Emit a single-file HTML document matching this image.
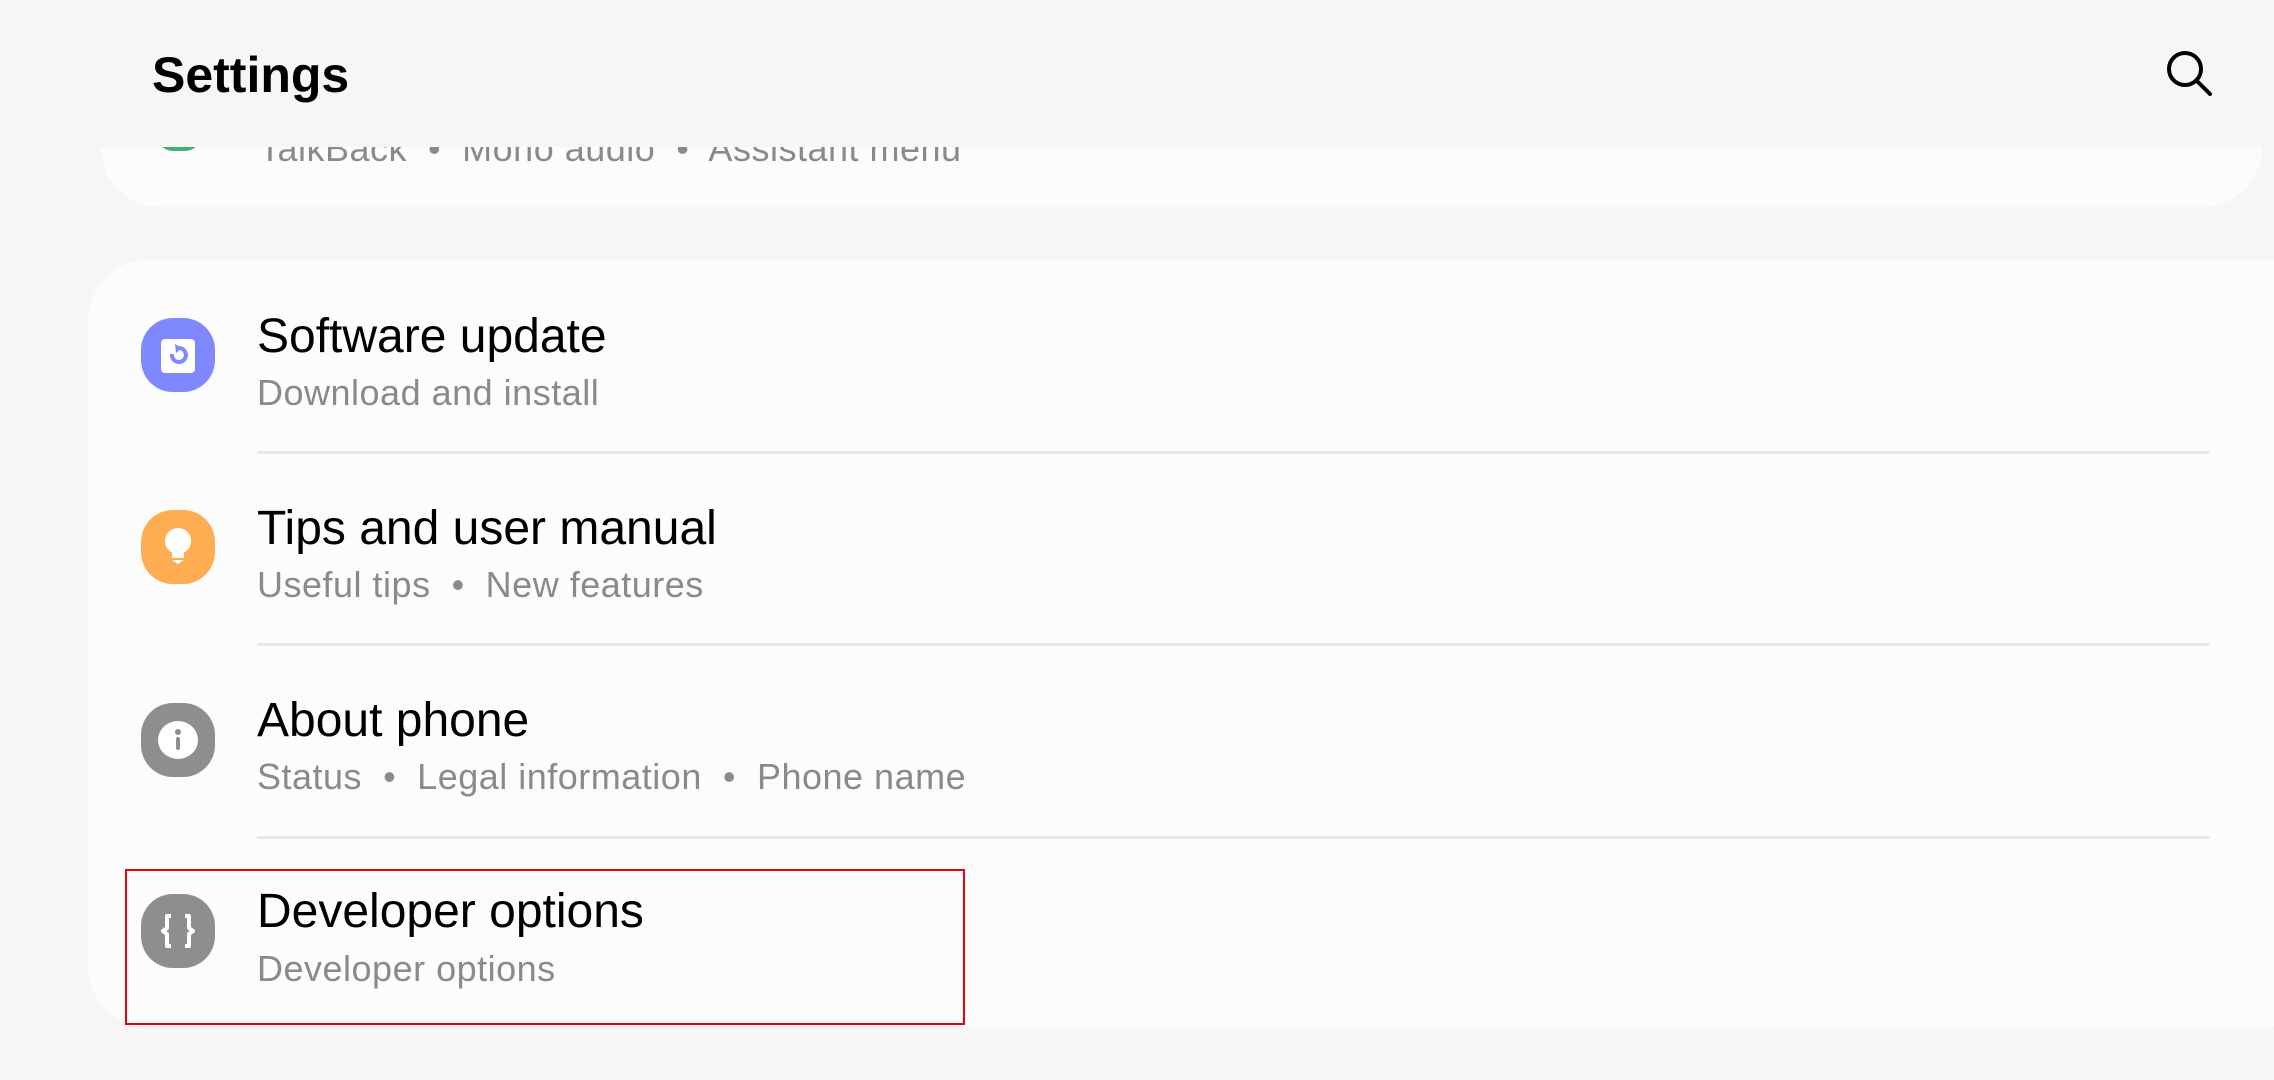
<!DOCTYPE html>
<html><head><meta charset="utf-8"><style>
html,body{margin:0;padding:0;}
body{width:2274px;height:1080px;background:#f6f6f6;position:relative;overflow:hidden;font-family:"Liberation Sans",sans-serif;}
.abs{position:absolute;}
.topclip{position:absolute;left:0;top:147px;width:2274px;height:80px;overflow:hidden;}
.topcard{position:absolute;left:101px;top:-60px;width:2161px;height:120px;background:#fcfcfc;border-radius:60px;}
.card{position:absolute;left:88px;top:260px;width:2240px;height:767px;background:#fcfcfc;border-radius:60px;}
.t{position:absolute;left:257px;font-size:48px;color:#000;white-space:nowrap;line-height:1;}
.s{position:absolute;left:257px;font-size:36px;color:#8a8a8a;white-space:nowrap;line-height:1;letter-spacing:0.5px;}
.div{position:absolute;left:257px;width:1953px;height:3px;background:#e8e8e8;}
.ic{position:absolute;left:141px;width:74px;height:74px;border-radius:32px;}
</style></head><body>
<div class="abs" style="left:152px;top:50px;font-size:50px;font-weight:bold;color:#000;line-height:1;">Settings</div>
<svg class="abs" style="left:2160px;top:44px" width="60" height="60" viewBox="0 0 60 60"><circle cx="25" cy="25" r="16" fill="none" stroke="#000" stroke-width="4"/><line x1="37" y1="37" x2="50" y2="50" stroke="#000" stroke-width="4" stroke-linecap="round"/></svg>
<div class="topclip"><div class="topcard"></div>
<div class="abs" style="left:157px;top:-12px;width:44px;height:16px;border-radius:0 0 22px 22px;background:#3cb371;"></div>
<div class="s" style="top:-16px;left:259px;">TalkBack &nbsp;•&nbsp; Mono audio &nbsp;•&nbsp; Assistant menu</div>
</div>
<div class="card"></div>

<div class="ic" style="top:318px;background:#8088ff;"></div>
<svg class="abs" style="left:141px;top:318px" width="74" height="74" viewBox="0 0 74 74"><rect x="20" y="21" width="34" height="34" rx="4" fill="#fff"/><path d="M31 36 a7 7 0 1 0 7 -6" fill="none" stroke="#8088ff" stroke-width="4"/><path d="M34 26 l7 4 -6 5z" fill="#8088ff"/></svg>
<div class="t" style="top:313px;">Software update</div>
<div class="s" style="top:375px;">Download and install</div>
<div class="div" style="top:451px;"></div>

<div class="ic" style="top:510px;background:#ffad52;"></div>
<svg class="abs" style="left:141px;top:510px" width="74" height="74" viewBox="0 0 74 74"><circle cx="37" cy="31" r="13" fill="#fff"/><rect x="31" y="40" width="12" height="8" fill="#fff"/><path d="M31 50 h12 l-6 4z" fill="#fff"/></svg>
<div class="t" style="top:505px;">Tips and user manual</div>
<div class="s" style="top:567px;">Useful tips &nbsp;•&nbsp; New features</div>
<div class="div" style="top:643px;"></div>

<div class="ic" style="top:703px;background:#8e8e8e;"></div>
<svg class="abs" style="left:141px;top:703px" width="74" height="74" viewBox="0 0 74 74"><ellipse cx="37" cy="37" rx="20" ry="19" fill="#fff"/><circle cx="37" cy="29" r="3" fill="#8e8e8e"/><rect x="35" y="34" width="4" height="13" rx="2" fill="#8e8e8e"/></svg>
<div class="t" style="top:697px;">About phone</div>
<div class="s" style="top:759px;">Status &nbsp;•&nbsp; Legal information &nbsp;•&nbsp; Phone name</div>
<div class="div" style="top:836px;"></div>

<div class="ic" style="top:894px;background:#8e8e8e;"></div>
<svg class="abs" style="left:141px;top:894px" width="74" height="74" viewBox="0 0 74 74"><path d="M30 22 h-4 v12 l-4 3 4 3 v12 h4" fill="none" stroke="#fff" stroke-width="4" stroke-linejoin="round"/><path d="M44 22 h4 v12 l4 3 -4 3 v12 h-4" fill="none" stroke="#fff" stroke-width="4" stroke-linejoin="round"/></svg>
<div class="t" style="top:888px;">Developer options</div>
<div class="s" style="top:951px;">Developer options</div>

<div class="abs" style="left:125px;top:869px;width:836px;height:152px;border:2px solid #e8000b;"></div>
</body></html>
